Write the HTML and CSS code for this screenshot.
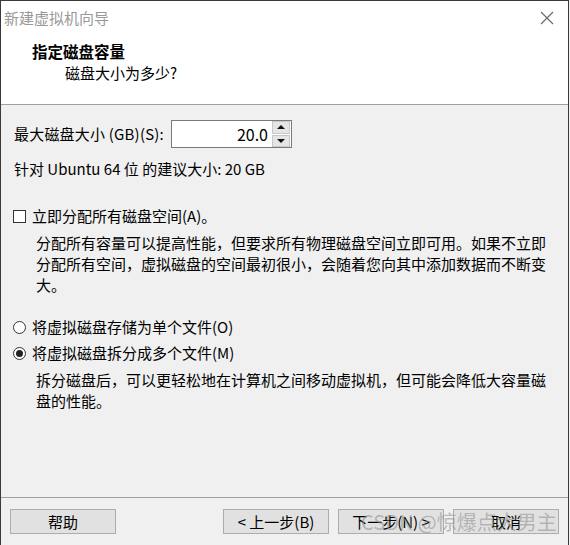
FILE: index.html
```html
<!DOCTYPE html>
<html lang="zh-CN">
<head>
<meta charset="utf-8">
<title>新建虚拟机向导</title>
<link rel="stylesheet" href="styles.css">
</head>
<body>
<div class="window">
  <div class="titlebar">
    <span class="title">新建虚拟机向导</span>
    <svg class="close" width="14" height="14" viewBox="0 0 14 14"><path d="M1 1 L13 13 M13 1 L1 13" stroke="#666" stroke-width="1.1" fill="none"/></svg>
  </div>
  <div class="header">
    <div class="h1">指定磁盘容量</div>
    <div class="h2">磁盘大小为多少?</div>
  </div>
  <div class="body">
    <div class="size-row">
      <span class="size-label">最大磁盘大小 (GB)(S):</span>
      <div class="spin">
        <span class="spin-val">20.0</span>
        <div class="spin-btns">
          <div class="spin-btn"><span class="tri-up"></span></div>
          <div class="spin-btn"><span class="tri-down"></span></div>
        </div>
      </div>
    </div>
    <div class="rec">针对 Ubuntu 64 位 的建议大小: 20 GB</div>
    <div class="opt-row check-row"><span class="checkbox"></span><span>立即分配所有磁盘空间(A)。</span></div>
    <p class="desc">分配所有容量可以提高性能，但要求所有物理磁盘空间立即可用。如果不立即分配所有空间，虚拟磁盘的空间最初很小，会随着您向其中添加数据而不断变大。</p>
    <div class="opt-row radio-row1"><span class="radio"></span><span>将虚拟磁盘存储为单个文件(O)</span></div>
    <div class="opt-row radio-row2"><span class="radio checked"></span><span>将虚拟磁盘拆分成多个文件(M)</span></div>
    <p class="desc">拆分磁盘后，可以更轻松地在计算机之间移动虚拟机，但可能会降低大容量磁盘的性能。</p>
  </div>
  <div class="footer">
    <div class="btn">帮助</div>
    <div class="spacer"></div>
    <div class="btn">&lt; 上一步(B)</div>
    <div class="btn">下一步(N) &gt;</div>
    <div class="btn">取消</div>
    <div class="watermark">CSDN @惊爆点大男主</div>
  </div>
</div>
</body>
</html>
```
FILE: styles.css
```css
html, body {
  margin: 0;
  padding: 0;
  background: #f0f0f0;
}
.window {
  width: 569px;
  height: 545px;
  border-left: 1px solid #3a3a3a;
  border-right: 1px solid #3a3a3a;
  border-top: 1px solid #3a3a3a;
  box-sizing: border-box;
  display: flex;
  flex-direction: column;
  background: #f0f0f0;
  font-family: "Noto Sans CJK SC", sans-serif;
  font-size: 15px;
  color: #000;
}
.titlebar {
  height: 33px;
  background: #fff;
  display: flex;
  align-items: center;
  justify-content: space-between;
  padding: 0 14px 0 3px;
}
.title {
  color: #999;
  font-size: 15px;
  line-height: 20px;
}
.close {
  display: block;
}
.header {
  background: #fff;
  padding: 7px 0 21px 0;
  border-bottom: 1px solid #a0a0a0;
}
.h1 {
  font-weight: bold;
  font-size: 15.5px;
  line-height: 20px;
  padding-left: 31px;
}
.h2 {
  line-height: 20px;
  margin-top: 2px;
  padding-left: 64px;
}
.body {
  flex: 1;
  padding: 0 0 0 12px;
}
.size-row {
  display: flex;
  align-items: center;
  margin-top: 15px;
  height: 28px;
}
.size-label {
  padding-left: 1px;
  line-height: 20px;
  width: 157px;
  letter-spacing: 0.2px;
}
.spin {
  width: 121px;
  height: 28px;
  box-sizing: border-box;
  border: 1px solid #7a7a7a;
  background: #fff;
  display: flex;
  align-items: center;
}
.spin-val {
  flex: 1;
  text-align: right;
  padding-right: 4px;
  font-size: 16px;
  line-height: 20px;
}
.spin-btns {
  width: 18px;
  height: 26px;
  display: flex;
  flex-direction: column;
  gap: 1px;
  margin-right: 1px;
}
.spin-btn {
  flex: 1;
  background: #e5e5e5;
  border: 1px solid #c8c8c8;
  display: flex;
  align-items: center;
  justify-content: center;
}
.tri-up {
  width: 0;
  height: 0;
  border-left: 4px solid transparent;
  border-right: 4px solid transparent;
  border-bottom: 4px solid #111;
}
.tri-down {
  width: 0;
  height: 0;
  border-left: 4px solid transparent;
  border-right: 4px solid transparent;
  border-top: 4px solid #111;
}
.rec {
  margin-top: 11px;
  line-height: 20px;
  padding-left: 1px;
}
.opt-row {
  display: flex;
  align-items: center;
  line-height: 20px;
  gap: 6px;
}
.check-row {
  margin-top: 27px;
}
.radio-row1 {
  margin-top: 22px;
}
.radio-row2 {
  margin-top: 6px;
}
.checkbox {
  width: 13px;
  height: 13px;
  box-sizing: border-box;
  border: 1px solid #333;
  background: #fff;
  flex: none;
}
.radio {
  width: 13px;
  height: 13px;
  box-sizing: border-box;
  border: 1px solid #333;
  border-radius: 50%;
  background: #fff;
  flex: none;
  display: flex;
  align-items: center;
  justify-content: center;
}
.radio.checked::after {
  content: "";
  width: 7px;
  height: 7px;
  border-radius: 50%;
  background: #222;
}
.desc {
  margin: 6px 0 0 23px;
  width: 515px;
  line-height: 21px;
  line-break: strict;
}
.footer {
  position: relative;
  height: 48px;
  box-sizing: border-box;
  border-top: 1px solid #a0a0a0;
  padding: 11px 9px 11px 9px;
  display: flex;
  gap: 9px;
}
.spacer {
  flex: 1;
}
.btn {
  width: 106px;
  height: 25px;
  box-sizing: border-box;
  border: 1px solid #adadad;
  background: #e1e1e1;
  display: flex;
  align-items: center;
  justify-content: center;
  line-height: 20px;
}
.watermark {
  position: absolute;
  left: 360px;
  top: 11px;
  font-size: 20px;
  line-height: 25px;
  color: rgba(140, 140, 140, 0.55);
  white-space: nowrap;
  pointer-events: none;
}
```
